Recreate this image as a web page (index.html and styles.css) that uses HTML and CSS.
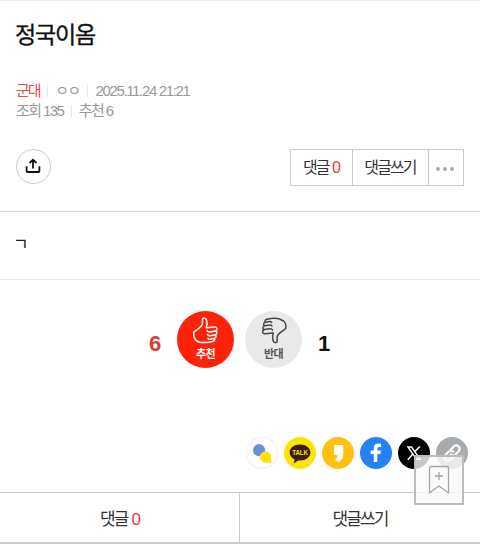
FILE: index.html
```html
<!DOCTYPE html>
<html lang="ko">
<head>
<meta charset="utf-8">
<title>정국이옴</title>
<link rel="stylesheet" href="styles.css">
</head>
<body>
<article class="post">
  <header class="head">
    <h1 class="title">정국이옴</h1>
    <div class="meta">
      <div class="meta-row"><span class="cat">군대</span><i class="bar"></i><span class="author">ㅇㅇ</span><i class="bar"></i><span>2025.11.24 21:21</span></div>
      <div class="meta-row meta-counts"><span>조회 135</span><i class="bar"></i><span>추천 6</span></div>
    </div>
    <div class="tools">
      <button class="share" aria-label="공유">
        <svg width="16" height="16" viewBox="0 0 16 16" fill="none" stroke="#111" stroke-width="1.8"><path d="M8 10.5V2M4.6 5 8 1.7 11.4 5M1.6 8.3V13q0 1 1 1h10.8q1 0 1-1V8.3"/></svg>
      </button>
      <div class="actions">
        <button class="act act-count">댓글 <b>0</b></button>
        <button class="act act-write">댓글쓰기</button>
        <button class="act act-more" aria-label="더보기"><i></i><i></i><i></i></button>
      </div>
    </div>
  </header>
  <div class="body">ㄱ</div>
  <section class="votes">
    <span class="num num-up">6</span>
    <button class="vote up">
      <svg width="30" height="29" viewBox="0 0 30 29" fill="none" stroke="#fff" stroke-width="1.5" stroke-linejoin="round" stroke-linecap="round"><path d="M2.8 16C5.5 13.4 10.6 11.6 11.4 8c.4-1.8-.4-4 .2-5.2.8-1.3 3.2-.9 3.9 1.2.9 2.6.6 5.2-.2 7.8l8.2-.9c2.7-.2 3.3 3.2 1.2 4.1 1.5.8 1.4 3.2-.3 3.8 1 1.2.7 2.9-.9 3.5.6 1.5-.3 2.7-1.8 3.1-4.2 1-8.2 1.6-11.9 1-3.6-.6-6-2.5-6.7-5.4-.4-1.8-.5-3.4-.3-5Z"/><path d="m24.4 15.1-5.5.8c-1.5.2-2.4-.3-2.8-1.3M24 18.9l-5 .8c-1.3.2-2.1-.2-2.4-1.1M23 22.5l-4 .7c-1.2.2-1.8-.2-2.1-1"/></svg>
      <span>추천</span>
    </button>
    <button class="vote down">
      <svg width="28" height="29" viewBox="0 0 28 29" fill="none" stroke="#444" stroke-width="1.5" stroke-linejoin="round" stroke-linecap="round"><path d="M25.7 12.5c-2.7 2.8-7.7 4.5-8.5 8.2-.4 1.8.4 4-.2 5.2-.8 1.3-3.2.9-3.9-1.2-.9-2.6-.6-5.2.2-7.8l-8.2.9c-2.7.2-3.3-3.2-1.2-4.1-1.5-.8-1.4-3.2.3-3.8-1-1.2-.7-2.9.9-3.5-.6-1.5.3-2.7 1.8-3.1 4.2-1 8.2-1.6 11.9-.6 1.8.5 2.9 1.7 4.6 2.1 2.2 2.1 3.1 4.7 2.3 7.7Z"/><path d="m4.2 13.6 5.5-.8c1.5-.2 2.4.3 2.8 1.3M4.6 9.8l5-.8c1.3-.2 2.1.2 2.4 1.1M5.6 6.2l4-.7c1.2-.2 1.8.2 2.1 1"/></svg>
      <span>반대</span>
    </button>
    <span class="num num-down">1</span>
  </section>
  <nav class="sns">
    <a class="sns-item near"><svg viewBox="0 0 32 32"><circle cx="13.1" cy="13.2" r="6.1" fill="#708be2"/><path d="M19.5 14.3a5.7 5.7 0 0 1 5.7 5.7v5.7h-5.7a5.7 5.7 0 0 1 0-11.4Z" fill="#fddf12"/></svg></a>
    <a class="sns-item talk"><svg viewBox="0 0 32 32"><path d="M16 7.5c5.8 0 10.4 3.5 10.4 8s-4.6 8-10.4 8l-1.8-.1-4.5 3 1-4c-3.1-1.4-5.1-3.9-5.1-6.9 0-4.5 4.6-8 10.4-8Z" fill="#3b1e1e"/><text x="16" y="18.2" text-anchor="middle" class="talk-text" textLength="15.6" lengthAdjust="spacingAndGlyphs">TALK</text></svg></a>
    <a class="sns-item story"><svg viewBox="0 0 32 32"><path d="M12 8h9.3v8.3c0 4.7-1.8 7.5-4.8 8.7l-3.6-2c1.6-1 2.6-2.7 2.8-5H12Z" fill="#fff"/></svg></a>
    <a class="sns-item fb"><svg viewBox="0 0 32 32"><path d="M13.8 25v-8h-3.2v-3.6h3.2v-2.3c0-3.2 1.8-4.6 4.6-4.6l2.7.2v3.2h-1.9c-1.4 0-1.9.7-1.9 1.8v1.7h3.6l-.5 3.6h-3.1v8Z" fill="#fff"/></svg></a>
    <a class="sns-item x"><svg viewBox="0 0 32 32" fill="none" stroke="#fff"><path d="M9.9 10h3.6l8.7 12.4h-3.7Z" stroke-width="1.4"/><path d="m21.8 9.5-5.3 5.6M14.8 17.1 9.8 22.8" stroke-width="1.5"/></svg></a>
    <a class="sns-item link"><svg viewBox="0 0 32 32" fill="none" stroke="#fff" stroke-width="2" stroke-linecap="round"><path d="m14.7 12.5 3-3c3.6-3 7.9 1.3 5 4.8l-3 3c-1.5 1.4-3.6 1.4-5 0M17.5 19.6l-3.1 3c-3.5 3-7.8-1.3-4.9-4.8l3-3c1.5-1.5 3.7-1.4 5 0"/></svg></a>
  </nav>
  <footer class="bottom">
    <button class="tab">댓글 <b>0</b></button>
    <button class="tab">댓글쓰기</button>
  </footer>
</article>
<button class="bookmark" aria-label="북마크">
  <svg width="22" height="30" viewBox="0 0 22 30" fill="none" stroke="#a5a5a5" stroke-width="1.3" stroke-linejoin="round"><path d="M1.5 3q0-1.5 1.5-1.5h16q1.5 0 1.5 1.5v25L11 21l-9.5 7ZM11 7v8M7 11h8"/></svg>
</button>
</body>
</html>
```

FILE: styles.css
```css
* { box-sizing: border-box; }
body {
  margin: 0;
  background: #fff;
  color: #222;
  font-family: "Liberation Sans", "Noto Sans CJK KR", sans-serif;
  overflow: hidden;
}
button {
  margin: 0;
  padding: 0;
  border: 0;
  background: none;
  color: inherit;
  font: inherit;
  letter-spacing: inherit;
}
b { font-weight: 400; color: #e33b3b; }
.post {
  height: 544px;
  display: flex;
  flex-direction: column;
  border-top: 1px solid #eee;
}
.head {
  height: 211px;
  flex: none;
  padding: 17px 16px 0 15px;
  border-bottom: 1px solid #d4d4d4;
}
.title {
  margin: 0;
  height: 34px;
  line-height: 34px;
  font-size: 23px;
  font-weight: 400;
  -webkit-text-stroke: .35px #111;
  letter-spacing: -1.2px;
  color: #111;
}
.meta {
  margin-top: 29px;
  padding-left: 1px;
  font-size: 15px;
  letter-spacing: -1.35px;
  color: #999;
}
.meta-row {
  display: flex;
  align-items: center;
  height: 20px;
  line-height: 20px;
}
.meta-row span { margin-right: -1.4px; }
.meta-row .cat { color: #ec4a4a; letter-spacing: -2px; }
.author { letter-spacing: -1.5px; }
.meta-counts { letter-spacing: -1.6px; }
.bar {
  width: 1px;
  height: 12px;
  margin: 0 7px 0 9px;
  background: #e8e8e8;
}
.tools {
  display: flex;
  justify-content: space-between;
  margin-top: 28px;
}
.share {
  width: 35px;
  height: 35px;
  display: flex;
  align-items: center;
  justify-content: center;
  border: 1px solid #ccc;
  border-radius: 50%;
  margin-left: 1px;
}
.share svg { margin: -2px 2px 0 0; }
.actions {
  display: flex;
  height: 37px;
  border: 1px solid #ccc;
  color: #333;
  font-size: 16px;
  letter-spacing: -1.9px;
}
.act { padding: 0 1px 3px 0; }
.act b { margin-left: 1px; }
.act + .act { border-left: 1px solid #ccc; }
.act-count { width: 61px; }
.act-write { width: 76px; }
.act-more {
  width: 35px;
  display: flex;
  align-items: center;
  justify-content: center;
  gap: 3px;
  padding: 3px 2px 0 0;
}
.act-more i {
  width: 4px;
  height: 4px;
  border-radius: 50%;
  background: #aaa;
}
.body {
  height: 68px;
  flex: none;
  padding: 20px 13px;
  border-bottom: 1px solid #e9e9e9;
  font-size: 17px;
  line-height: 26px;
}
.votes {
  display: flex;
  height: 127px;
  padding: 31px 0 0 149px;
}
.num {
  width: 28px;
  padding-top: 19px;
  font-size: 22px;
  line-height: 28px;
  font-weight: 700;
}
.num-up { color: #d6403a; }
.num-down { color: #111; padding-left: 16px; }
.vote {
  width: 57px;
  height: 57px;
  border-radius: 50%;
  display: flex;
  flex-direction: column;
  align-items: center;
  padding-top: 5px;
  font-size: 11px;
  line-height: 16px;
  font-weight: 700;
  letter-spacing: -.7px;
}
.vote span { margin-top: 1px; }
.up { background: #ff220a; color: #fff; }
.down { margin-left: 11px; background: #e9e9e9; color: #555; }
.sns {
  display: flex;
  gap: 6px;
  height: 85px;
  padding: 30px 0 0 246px;
}
.sns-item {
  width: 32px;
  height: 32px;
  flex: none;
  border-radius: 50%;
}
.sns-item svg { display: block; width: 100%; height: 100%; }
.near { box-shadow: inset 0 0 0 1px #eeeef5; }
.talk { background: #fce500; }
.talk-text { font: 700 7.2px "Liberation Sans", sans-serif; fill: #fce500; }
.story { background: #ffc111; }
.fb { background: #2681f5; }
.x { background: #000; }
.link { background: #a8abaf; }
.bottom {
  height: 52px;
  flex: none;
  display: flex;
  border-top: 1px solid #ccc;
  border-bottom: 2px solid #ccc;
  font-size: 17px;
  letter-spacing: -1.9px;
  color: #333;
}
.tab { width: 240px; }
.tab b { margin-left: 1px; }
.tab:first-child { border-right: 1px solid #ccc; }
.bookmark {
  position: fixed;
  right: 16px;
  bottom: 39px;
  width: 50px;
  height: 50px;
  display: flex;
  align-items: center;
  justify-content: center;
  border: 2px solid #bdbdbd;
  background: rgba(250, 250, 250, .8);
}
```
